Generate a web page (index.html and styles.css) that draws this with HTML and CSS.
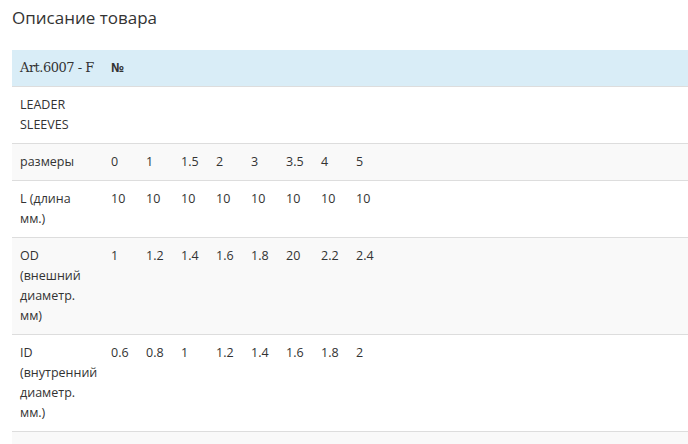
FILE: index.html
```html
<!DOCTYPE html>
<html lang="ru">
<head>
    <meta charset="UTF-8">
    <title>Описание товара</title>
    <link rel="stylesheet" href="styles.css">
</head>
<body>
    <div class="description">
        <h3 class="title">Описание товара</h3>
        <table class="specs">
            <colgroup>
                <col class="col-label">
                <col class="col-num"><col class="col-num"><col class="col-num"><col class="col-num">
                <col class="col-num"><col class="col-num"><col class="col-num"><col class="col-num">
                <col>
            </colgroup>
            <tbody>
                <tr class="info">
                    <td class="art">Art.6007 - F</td>
                    <td colspan="9" class="num-sign">№</td>
                </tr>
                <tr>
                    <td>LEADER SLEEVES</td>
                    <td></td><td></td><td></td><td></td><td></td><td></td><td></td><td></td><td></td>
                </tr>
                <tr>
                    <td>размеры</td>
                    <td>0</td><td>1</td><td>1.5</td><td>2</td><td>3</td><td>3.5</td><td>4</td><td>5</td><td></td>
                </tr>
                <tr>
                    <td>L (длина мм.)</td>
                    <td>10</td><td>10</td><td>10</td><td>10</td><td>10</td><td>10</td><td>10</td><td>10</td><td></td>
                </tr>
                <tr>
                    <td>OD (внешний диаметр. мм)</td>
                    <td>1</td><td>1.2</td><td>1.4</td><td>1.6</td><td>1.8</td><td>20</td><td>2.2</td><td>2.4</td><td></td>
                </tr>
                <tr>
                    <td>ID (внутренний диаметр. мм.)</td>
                    <td>0.6</td><td>0.8</td><td>1</td><td>1.2</td><td>1.4</td><td>1.6</td><td>1.8</td><td>2</td><td></td>
                </tr>
                <tr>
                    <td>&nbsp;</td>
                    <td></td><td></td><td></td><td></td><td></td><td></td><td></td><td></td><td></td>
                </tr>
            </tbody>
        </table>
    </div>
</body>
</html>
```

FILE: styles.css
```css
* {
    padding: 0;
    margin: 0;
    box-sizing: border-box;
}

body {
    font-family: "Open Sans", "Liberation Sans", sans-serif;
    font-size: 12.5px;
    color: #333;
    background: #fff;
    overflow: hidden;
}

.description {
    padding-left: 12px;
}

.title {
    font-size: 17px;
    font-weight: normal;
    line-height: 20px;
    margin: 8px 0 22px;
}

.specs {
    width: 100%;
    border-collapse: collapse;
    table-layout: fixed;
}

.col-label {
    width: 91px;
}

.col-num {
    width: 35px;
}

.specs td {
    padding: 8px;
    line-height: 20px;
    vertical-align: top;
    border-top: 1px solid #ddd;
}

.specs tr:first-child td {
    border-top: none;
}

.specs tr:nth-child(odd) {
    background: #f9f9f9;
}

.specs tr.info {
    background: #d9edf7;
}

.art {
    font-family: "DejaVu Serif", "Liberation Serif", serif;
    font-size: 13px;
    letter-spacing: -0.5px;
    white-space: nowrap;
}

.num-sign {
    font-weight: bold;
}
```
